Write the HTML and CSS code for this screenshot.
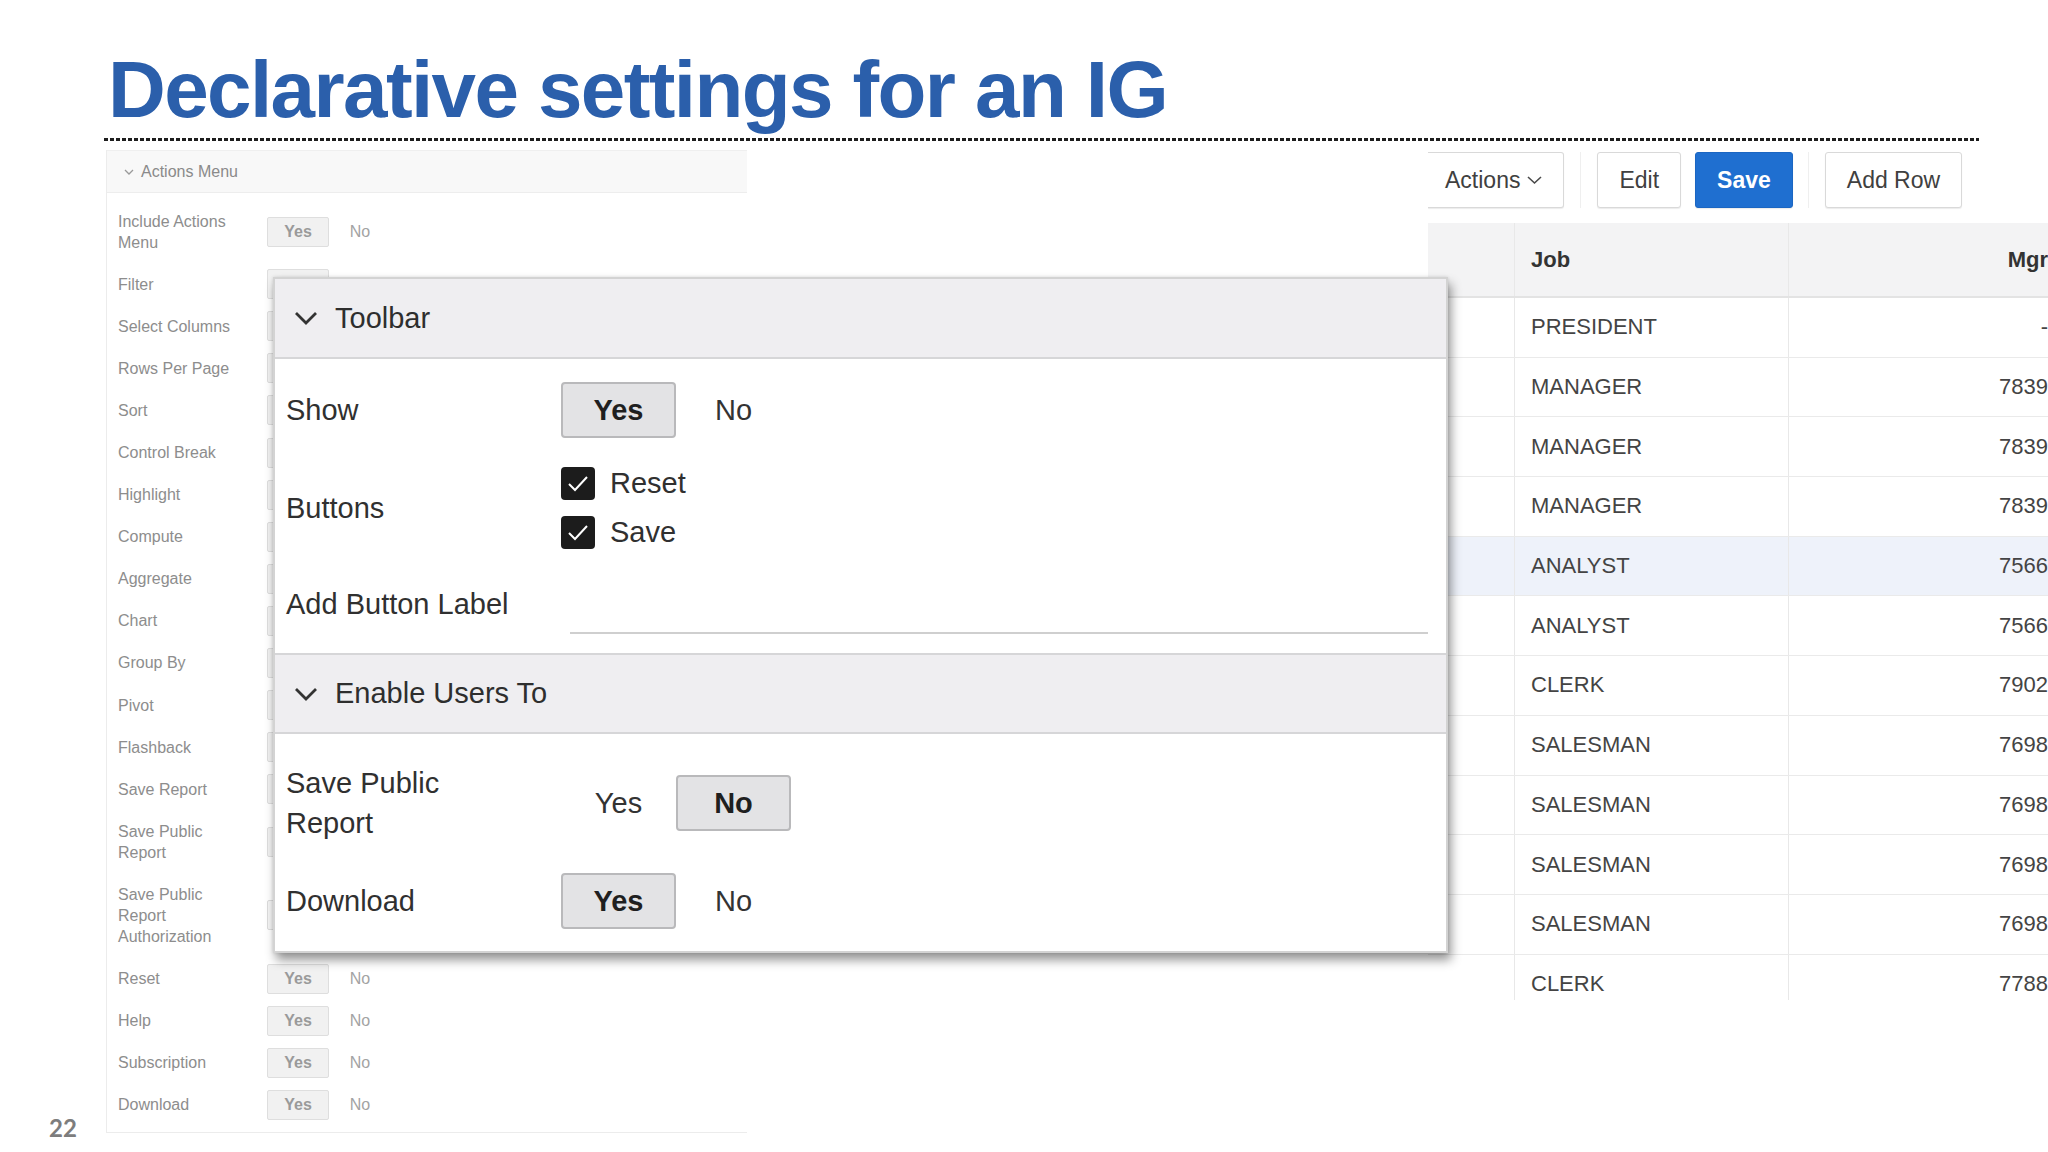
FILE: index.html
```html
<!DOCTYPE html>
<html lang="en">
<head>
<meta charset="utf-8">
<title>Declarative settings for an IG</title>
<link rel="stylesheet" href="styles.css">
</head>
<body>
<div class="slide">
  <header class="title-area">
    <h1 class="title">Declarative settings for an IG</h1>
    <div class="rule"></div>
  </header>

  <main class="content">
    <div class="pagenum">22</div>

    <section class="attr-panel">
      <div class="attr-head">
        <svg class="attr-chev" viewBox="0 0 10 6" width="10" height="6"><path d="M1 1 L5 5 L9 1" fill="none" stroke="#9a9a9a" stroke-width="1.3"/></svg>
        <span>Actions Menu</span>
      </div>
      <div class="attr-body">
        <div class="attr-row"><div class="attr-label">Include Actions Menu</div><div class="mini-seg"><span class="mini-opt on">Yes</span><span class="mini-opt">No</span></div></div>
        <div class="attr-row"><div class="attr-label">Filter</div><div class="mini-seg"><span class="mini-opt on"></span><span class="mini-opt"></span></div></div>
        <div class="attr-row"><div class="attr-label">Select Columns</div><div class="mini-seg"><span class="mini-opt on"></span><span class="mini-opt"></span></div></div>
        <div class="attr-row"><div class="attr-label">Rows Per Page</div><div class="mini-seg"><span class="mini-opt on"></span><span class="mini-opt"></span></div></div>
        <div class="attr-row"><div class="attr-label">Sort</div><div class="mini-seg"><span class="mini-opt on"></span><span class="mini-opt"></span></div></div>
        <div class="attr-row"><div class="attr-label">Control Break</div><div class="mini-seg"><span class="mini-opt on"></span><span class="mini-opt"></span></div></div>
        <div class="attr-row"><div class="attr-label">Highlight</div><div class="mini-seg"><span class="mini-opt on"></span><span class="mini-opt"></span></div></div>
        <div class="attr-row"><div class="attr-label">Compute</div><div class="mini-seg"><span class="mini-opt on"></span><span class="mini-opt"></span></div></div>
        <div class="attr-row"><div class="attr-label">Aggregate</div><div class="mini-seg"><span class="mini-opt on"></span><span class="mini-opt"></span></div></div>
        <div class="attr-row"><div class="attr-label">Chart</div><div class="mini-seg"><span class="mini-opt on"></span><span class="mini-opt"></span></div></div>
        <div class="attr-row"><div class="attr-label">Group By</div><div class="mini-seg"><span class="mini-opt on"></span><span class="mini-opt"></span></div></div>
        <div class="attr-row"><div class="attr-label">Pivot</div><div class="mini-seg"><span class="mini-opt on"></span><span class="mini-opt"></span></div></div>
        <div class="attr-row"><div class="attr-label">Flashback</div><div class="mini-seg"><span class="mini-opt on"></span><span class="mini-opt"></span></div></div>
        <div class="attr-row"><div class="attr-label">Save Report</div><div class="mini-seg"><span class="mini-opt on"></span><span class="mini-opt"></span></div></div>
        <div class="attr-row"><div class="attr-label">Save Public Report</div><div class="mini-seg"><span class="mini-opt on"></span><span class="mini-opt"></span></div></div>
        <div class="attr-row"><div class="attr-label">Save Public Report Authorization</div><div class="mini-select"></div></div>
        <div class="attr-row"><div class="attr-label">Reset</div><div class="mini-seg"><span class="mini-opt on">Yes</span><span class="mini-opt">No</span></div></div>
        <div class="attr-row"><div class="attr-label">Help</div><div class="mini-seg"><span class="mini-opt on">Yes</span><span class="mini-opt">No</span></div></div>
        <div class="attr-row"><div class="attr-label">Subscription</div><div class="mini-seg"><span class="mini-opt on">Yes</span><span class="mini-opt">No</span></div></div>
        <div class="attr-row"><div class="attr-label">Download</div><div class="mini-seg"><span class="mini-opt on">Yes</span><span class="mini-opt">No</span></div></div>
      </div>
    </section>

    <section class="grid-area">
      <div class="grid-toolbar">
        <div class="tb-btn tb-actions">Actions<svg class="tb-chev" viewBox="0 0 17 10" width="17" height="10"><path d="M2 2 L8.5 8 L15 2" fill="none" stroke="#4a4a4a" stroke-width="1.6"/></svg></div>
        <div class="tb-sep"></div>
        <div class="tb-btn">Edit</div>
        <div class="tb-btn tb-primary">Save</div>
        <div class="tb-sep"></div>
        <div class="tb-btn">Add Row</div>
      </div>
      <div class="grid">
        <div class="g-row g-head"><div class="g-cell"></div><div class="g-cell">Job</div><div class="g-cell g-num">Mgr</div></div>
        <div class="g-row"><div class="g-cell"></div><div class="g-cell">PRESIDENT</div><div class="g-cell g-num">-</div></div>
        <div class="g-row"><div class="g-cell"></div><div class="g-cell">MANAGER</div><div class="g-cell g-num">7839</div></div>
        <div class="g-row"><div class="g-cell"></div><div class="g-cell">MANAGER</div><div class="g-cell g-num">7839</div></div>
        <div class="g-row"><div class="g-cell"></div><div class="g-cell">MANAGER</div><div class="g-cell g-num">7839</div></div>
        <div class="g-row g-sel"><div class="g-cell"></div><div class="g-cell">ANALYST</div><div class="g-cell g-num">7566</div></div>
        <div class="g-row"><div class="g-cell"></div><div class="g-cell">ANALYST</div><div class="g-cell g-num">7566</div></div>
        <div class="g-row"><div class="g-cell"></div><div class="g-cell">CLERK</div><div class="g-cell g-num">7902</div></div>
        <div class="g-row"><div class="g-cell"></div><div class="g-cell">SALESMAN</div><div class="g-cell g-num">7698</div></div>
        <div class="g-row"><div class="g-cell"></div><div class="g-cell">SALESMAN</div><div class="g-cell g-num">7698</div></div>
        <div class="g-row"><div class="g-cell"></div><div class="g-cell">SALESMAN</div><div class="g-cell g-num">7698</div></div>
        <div class="g-row"><div class="g-cell"></div><div class="g-cell">SALESMAN</div><div class="g-cell g-num">7698</div></div>
        <div class="g-row"><div class="g-cell"></div><div class="g-cell">CLERK</div><div class="g-cell g-num">7788</div></div>
      </div>
    </section>
  </main>

  <div class="modal">
    <div class="m-head">
      <svg class="m-chev" viewBox="0 0 24 14" width="24" height="14"><path d="M2 2 L12 12 L22 2" fill="none" stroke="#333" stroke-width="2.8"/></svg>
      <span>Toolbar</span>
    </div>
    <div class="m-row m-row-show">
      <div class="m-label">Show</div>
      <div class="seg"><span class="seg-opt on">Yes</span><span class="seg-opt">No</span></div>
    </div>
    <div class="m-row m-row-buttons">
      <div class="m-label">Buttons</div>
      <div class="checks">
        <div class="check"><span class="cbox"><svg viewBox="0 0 34 33" width="34" height="33"><path d="M8 17 L14 23 L26 10" fill="none" stroke="#fff" stroke-width="2"/></svg></span><span>Reset</span></div>
        <div class="check"><span class="cbox"><svg viewBox="0 0 34 33" width="34" height="33"><path d="M8 17 L14 23 L26 10" fill="none" stroke="#fff" stroke-width="2"/></svg></span><span>Save</span></div>
      </div>
    </div>
    <div class="m-row m-row-addlabel">
      <div class="m-label">Add Button Label</div>
      <div class="m-input"></div>
    </div>
    <div class="m-head m-head-2">
      <svg class="m-chev" viewBox="0 0 24 14" width="24" height="14"><path d="M2 2 L12 12 L22 2" fill="none" stroke="#333" stroke-width="2.8"/></svg>
      <span>Enable Users To</span>
    </div>
    <div class="m-row m-row-spr">
      <div class="m-label m-label-wrap">Save Public Report</div>
      <div class="seg"><span class="seg-opt">Yes</span><span class="seg-opt on">No</span></div>
    </div>
    <div class="m-row m-row-dl">
      <div class="m-label">Download</div>
      <div class="seg"><span class="seg-opt on">Yes</span><span class="seg-opt">No</span></div>
    </div>
  </div>
</div>
</body>
</html>
```

FILE: styles.css
```css
* { box-sizing: border-box; }

html, body {
  margin: 0;
  padding: 0;
  background: #ffffff;
}

.slide {
  position: relative;
  width: 2048px;
  height: 1152px;
  overflow: hidden;
  background: #ffffff;
  font-family: "Liberation Sans", Arial, sans-serif;
  color: #333;
}

/* ---------- title ---------- */
.title-area {
  padding-top: 45px;
}

.title {
  margin: 0 0 0 108px;
  font-family: "Liberation Sans", Arial, sans-serif;
  font-weight: 700;
  font-size: 80px;
  line-height: 90px;
  letter-spacing: -1.6px;
  color: #2b5fab;
  white-space: nowrap;
}

.rule {
  margin: 3px 0 0 104px;
  width: 1875px;
  height: 3px;
  background: repeating-linear-gradient(to right, #1e1e1e 0 4px, transparent 4px 6px);
}

/* ---------- content row ---------- */
.content {
  display: flex;
  margin-top: 9px;
  align-items: flex-start;
}

.pagenum {
  flex: none;
  width: 106px;
  align-self: flex-end;
  padding-left: 49px;
  margin-bottom: -7px;
  font-family: Lato, "Open Sans", sans-serif;
  font-weight: 700;
  font-size: 24px;
  line-height: 24px;
  color: #7d7d7d;
}

/* ---------- faded attribute panel ---------- */
.attr-panel {
  flex: none;
  width: 641px;
  border-left: 1px solid #ececec;
  border-bottom: 1px solid #ececec;
  font-size: 16px;
  color: #8d8d8d;
}

.attr-head {
  height: 43px;
  display: flex;
  align-items: center;
  gap: 7px;
  padding-left: 17px;
  background: #f8f8f8;
  border-top: 1px solid #efefef;
  border-bottom: 1px solid #ededed;
  color: #8a8a8a;
}

.attr-body {
  padding: 7px 0 6px 0;
}

.attr-row {
  display: flex;
  align-items: center;
  padding-left: 11px;
}

.attr-label {
  width: 149px;
  padding: 10.55px 24px 10.55px 0;
  line-height: 21px;
}

.mini-seg {
  display: flex;
  align-items: center;
}

.mini-opt {
  width: 62px;
  height: 30px;
  display: flex;
  align-items: center;
  justify-content: center;
  color: #a3a3a3;
  font-size: 16px;
}

.mini-opt.on {
  background: #f1f1f1;
  border: 1px solid #dedede;
  border-radius: 2px;
  color: #9a9a9a;
  font-weight: 700;
}

.mini-select {
  width: 124px;
  height: 30px;
  border: 1px solid #dcdcdc;
  border-radius: 2px;
  background: #f4f4f4;
}

/* ---------- grid ---------- */
.grid-area {
  flex: none;
  margin-left: auto;
  width: 620px;
  height: 850px;
  overflow: hidden;
}

.grid-toolbar {
  display: flex;
  align-items: stretch;
  height: 56px;
  margin-top: 2px;
  font-size: 23px;
  color: #404040;
}

.tb-btn {
  display: flex;
  align-items: center;
  padding: 0 21px;
  background: #fff;
  border: 1px solid #d9d9d9;
  border-radius: 3px;
  box-shadow: 0 1px 1px rgba(0, 0, 0, 0.08);
  white-space: nowrap;
}

.tb-actions {
  border-left: none;
  border-radius: 0 3px 3px 0;
  padding: 0 20px 0 17px;
  gap: 6px;
}

.tb-chev { display: block; }

.tb-sep {
  width: 1px;
  background: #efefef;
  margin: 0 16px 0 16px;
}

.tb-btn + .tb-primary { margin-left: 14px; }
.tb-primary + .tb-sep { margin-left: 15px; }

.tb-primary {
  background: #1f6fd0;
  border-color: #1b66c2;
  color: #ffffff;
  font-weight: 700;
}

.grid {
  width: 636px;
  margin-top: 15px;
  font-size: 22px;
  color: #444;
}

.g-row {
  display: grid;
  grid-template-columns: 87px 274px 275px;
  height: 59.7px;
  border-bottom: 1px solid #eaeaea;
}

.g-head {
  height: 75px;
  background: #f3f3f4;
  border-bottom: 2px solid #e3e3e3;
  font-weight: 700;
  color: #333;
}

.g-sel { background: #eef2fa; }

.g-cell {
  display: flex;
  align-items: center;
  padding: 0 16px;
  border-right: 1px solid #e8e8e8;
  white-space: nowrap;
}

.g-cell:last-child { border-right: none; }

.g-num { justify-content: flex-end; }

/* ---------- modal (overlay) ---------- */
.modal {
  position: absolute;
  left: 273px;
  top: 277px;
  width: 1175px;
  height: 676px;
  background: #ffffff;
  border: 2px solid #d3d3d3;
  box-shadow: 3px 7px 10px rgba(0, 0, 0, 0.42), 0 0 3px rgba(0, 0, 0, 0.12);
  font-size: 29px;
  color: #303030;
}

.m-head {
  height: 80px;
  display: flex;
  align-items: center;
  gap: 17px;
  padding-left: 19px;
  background: #efeef1;
  border-bottom: 2px solid #d6d6d8;
  color: #2e2e2e;
}

.m-head-2 {
  height: 81px;
  border-top: 2px solid #d6d6d8;
}

.m-chev { display: block; flex: none; }

.m-row {
  display: flex;
  align-items: center;
  padding-left: 11px;
}

.m-row-show { height: 102px; }
.m-row-buttons { height: 94px; }
.m-row-addlabel { height: 98px; }
.m-row-spr { height: 138px; }
.m-row-dl { height: 58px; }

.m-label {
  flex: none;
  width: 275px;
  line-height: 40px;
  white-space: nowrap;
}

.m-label-wrap {
  white-space: normal;
  padding-right: 100px;
}

.seg {
  display: flex;
}

.seg-opt {
  width: 115px;
  height: 56px;
  display: flex;
  align-items: center;
  justify-content: center;
  color: #333;
}

.seg-opt.on {
  background: #e3e3e5;
  border: 2px solid #b9b9bb;
  border-radius: 4px;
  font-weight: 700;
  color: #1f1f1f;
}

.checks {
  display: flex;
  flex-direction: column;
  gap: 16px;
}

.check {
  display: flex;
  align-items: center;
  gap: 15px;
  height: 33px;
}

.cbox {
  display: block;
  width: 34px;
  height: 33px;
  background: #1c1c1c;
  border-radius: 4px;
}

.cbox svg { display: block; }

.m-input {
  flex: 1;
  align-self: flex-end;
  height: 2px;
  margin: 0 18px 19px 9px;
  background: #cfcfcf;
}
```
